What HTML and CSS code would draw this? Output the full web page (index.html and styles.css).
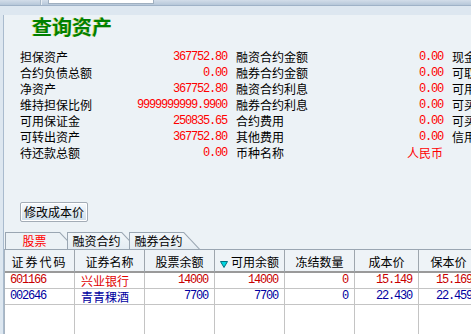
FILE: index.html
```html
<!DOCTYPE html>
<html lang="zh-CN">
<head>
  <meta charset="UTF-8">
  <title>查询资产</title>
  <link rel="stylesheet" href="styles.css">
</head>
<body>
  <!-- Top strip -->
  <div class="topbar">
    <span class="tb-sep"></span>
    <span class="tb-box"></span>
  </div>

  <div class="frame">
    <h1 class="title">查询资产</h1>

    <div class="info">
      <div class="item"><span>担保资产</span><span class="num">367752.80</span></div>
      <div class="item"><span>融资合约金额</span><span class="num">0.00</span></div>
      <div class="item"><span>现金资产</span></div>

      <div class="item"><span>合约负债总额</span><span class="num">0.00</span></div>
      <div class="item"><span>融券合约金额</span><span class="num">0.00</span></div>
      <div class="item"><span>可取资金</span></div>

      <div class="item"><span>净资产</span><span class="num">367752.80</span></div>
      <div class="item"><span>融资合约利息</span><span class="num">0.00</span></div>
      <div class="item"><span>可用资金</span></div>

      <div class="item"><span>维持担保比例</span><span class="num">9999999999.9900</span></div>
      <div class="item"><span>融券合约利息</span><span class="num">0.00</span></div>
      <div class="item"><span>可买担保品资金</span></div>

      <div class="item"><span>可用保证金</span><span class="num">250835.65</span></div>
      <div class="item"><span>合约费用</span><span class="num">0.00</span></div>
      <div class="item"><span>可买标的证券资金</span></div>

      <div class="item"><span>可转出资产</span><span class="num">367752.80</span></div>
      <div class="item"><span>其他费用</span><span class="num">0.00</span></div>
      <div class="item"><span>信用额度</span></div>

      <div class="item"><span>待还款总额</span><span class="num">0.00</span></div>
      <div class="item"><span>币种名称</span><span class="red">人民币</span></div>
      <div class="item"></div>
    </div>

    <button class="btn">修改成本价</button>

    <!-- Tabs -->
    <div class="tabs">
      <div class="tab active"><div class="tab-in"><span class="tab-label">股票</span></div></div>
      <div class="tab"><div class="tab-in"><span class="tab-label">融资合约</span></div></div>
      <div class="tab"><div class="tab-in"><span class="tab-label">融券合约</span></div></div>
    </div>

    <!-- Holdings table -->
    <div class="table">
      <div class="row head">
        <div class="cell wide">证券代码</div>
        <div class="cell">证券名称</div>
        <div class="cell">股票余额</div>
        <div class="cell"><svg class="sort" width="8" height="7" viewBox="0 0 8 7"><polygon points="0.5,0.5 7.5,0.5 4,6.5" fill="#00d8e0" stroke="#007080" stroke-width="1"/></svg>可用余额</div>
        <div class="cell">冻结数量</div>
        <div class="cell">成本价</div>
        <div class="cell">保本价</div>
      </div>
      <div class="row up">
        <div class="cell left num">601166</div>
        <div class="cell left name">兴业银行</div>
        <div class="cell right num">14000</div>
        <div class="cell right num">14000</div>
        <div class="cell right num">0</div>
        <div class="cell right num">15.149</div>
        <div class="cell right num">15.169</div>
      </div>
      <div class="row down">
        <div class="cell left num">002646</div>
        <div class="cell left name">青青稞酒</div>
        <div class="cell right num">7700</div>
        <div class="cell right num">7700</div>
        <div class="cell right num">0</div>
        <div class="cell right num">22.430</div>
        <div class="cell right num">22.459</div>
      </div>
      <div class="row filler">
        <div class="cell"></div>
        <div class="cell"></div>
        <div class="cell"></div>
        <div class="cell"></div>
        <div class="cell"></div>
        <div class="cell"></div>
        <div class="cell"></div>
      </div>
    </div>
  </div>
</body>
</html>
```

FILE: styles.css
```css
* {
  margin: 0;
  padding: 0;
  box-sizing: border-box;
}

body {
  width: 471px;
  height: 334px;
  overflow: hidden;
  font-family: "Noto Sans CJK SC", sans-serif;
  font-size: 12px;
  color: #000;
  background: #dde7f0;
}

/* Top strip */
.topbar {
  height: 6px;
  display: flex;
  align-items: flex-start;
  background: linear-gradient(#d2dde9, #b6c7d9);
  border-bottom: 1px solid #9fb2c7;
}

.tb-sep {
  width: 2px;
  height: 5px;
  margin-left: 40px;
  background: #e8eef4;
  border-left: 1px solid #a8b8c8;
}

.tb-box {
  width: 106px;
  height: 4px;
  margin-left: 6px;
  background: #fff;
  border: 1px solid #a0b0c0;
  border-top: none;
}

.frame {
  margin-left: 3px;
  height: 328px;
  background: #ecf2f6;
  border-left: 1px solid #a9bbce;
}

.title {
  margin-top: 9px;
  padding-left: 28px;
  font-size: 20px;
  line-height: 24px;
  font-weight: bold;
  color: #008000;
  text-shadow: -1px 0 0 rgba(190, 200, 0, 0.55);
}

/* Info grid */
.info {
  margin-top: 10px;
  padding-left: 16px;
  display: grid;
  grid-template-columns: 207px 207px 120px;
  column-gap: 9px;
  width: 600px;
}

.item {
  display: flex;
  justify-content: space-between;
  height: 16px;
  line-height: 16px;
  white-space: nowrap;
}

.num {
  font-family: "Liberation Mono", monospace;
  font-size: 12px;
  letter-spacing: -1.2px;
}

.info .num,
.red {
  color: #ff0000;
}

/* Button */
.btn {
  display: block;
  margin: 41px 0 0 16px;
  width: 68px;
  height: 20px;
  font-family: "Noto Sans CJK SC", sans-serif;
  font-size: 12px;
  line-height: 18px;
  color: #000;
  background: linear-gradient(#f7fafd, #cfdfeb);
  border: 1px solid #a3acb6;
  border-radius: 2px;
  box-shadow: inset 0 0 0 1px #fff;
}

/* Tabs */
.tabs {
  display: flex;
  margin-top: 10px;
  padding-left: 1px;
  border-bottom: 1px solid #9aa6b2;
}

.tab {
  position: relative;
  width: 71px;
  height: 17px;
  margin-right: -9px;
  background: #9aa6b2;
  clip-path: polygon(0 0, 55px 0, 71px 100%, 0 100%);
}

.tab-in {
  height: 16px;
  margin: 1px 0 0 1px;
  padding-left: 2px;
  background: linear-gradient(#f2f6f9, #e4ecf2);
  clip-path: polygon(0 0, 53.5px 0, 68.6px 16px, 0 16px);
}

.tab.active .tab-in {
  background: #ecf2f6;
}

.tab-label {
  display: block;
  width: 53px;
  text-align: center;
  line-height: 16px;
}

.tab.active .tab-label {
  color: #ff0000;
}

/* Table */
.table {
  width: 500px;
  border-left: 1px solid #a8b4c0;
}

.row {
  display: grid;
  grid-template-columns: 70px 70px 70px 70px 70px 64px 60px;
}

.cell {
  height: 16px;
  line-height: 15px;
  white-space: nowrap;
  overflow: hidden;
  background: #fff;
  border-right: 1px solid #c4c4c4;
  border-bottom: 1px solid #c4c4c4;
}

.head .cell {
  height: 23px;
  padding-top: 3px;
  line-height: 17px;
  text-align: center;
  background: #eef3f7;
  border-right: 1px solid #9ea6ae;
  border-bottom: 2px solid #9a9a9a;
}

.head .wide {
  letter-spacing: 2px;
}

.sort {
  margin-right: 3px;
  vertical-align: -1px;
}

.left {
  padding-left: 5px;
}

.name {
  padding-left: 6px;
}

.right {
  text-align: right;
  padding-right: 6px;
}

.up .cell {
  color: #c80000;
}

.up .name {
  color: #e00000;
}

.down .cell {
  color: #0000a0;
}

.filler .cell {
  height: 40px;
  border-bottom: none;
}
```
